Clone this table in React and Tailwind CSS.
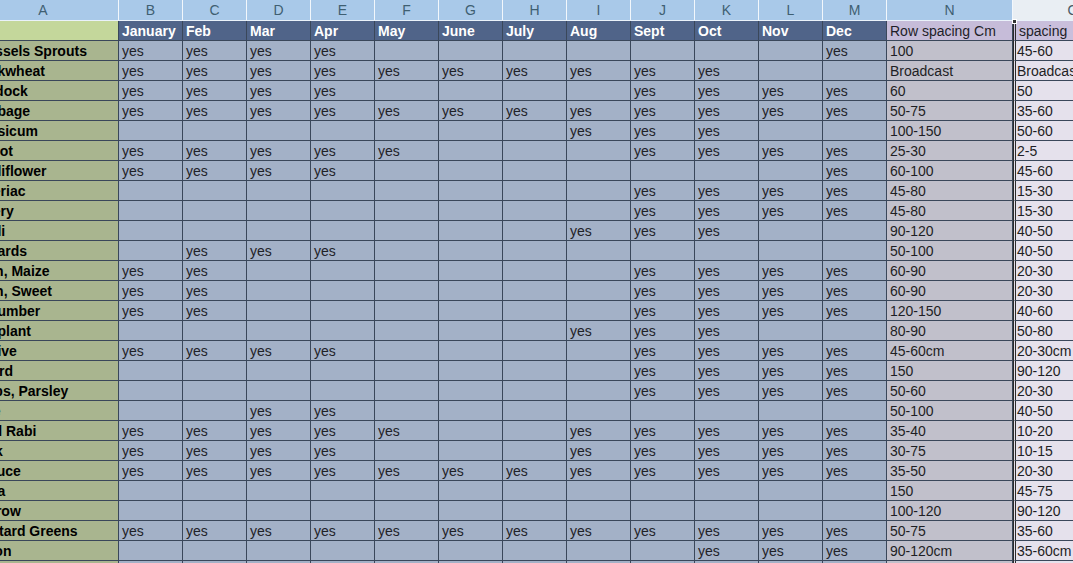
import React from 'react';

const months = ['January', 'Feb', 'Mar', 'Apr', 'May', 'June', 'July', 'Aug', 'Sept', 'Oct', 'Nov', 'Dec'];
const letters = ['B', 'C', 'D', 'E', 'F', 'G', 'H', 'I', 'J', 'K', 'L', 'M'];

// x = "yes" in that month
const crops = [
  ['Brussels Sprouts', 'xxxx.......x', '100', '45-60'],
  ['Buckwheat', 'xxxxxxxxxx..', 'Broadcast', 'Broadcast'],
  ['Burdock', 'xxxx....xxxx', '60', '50'],
  ['Cabbage', 'xxxxxxxxxxxx', '50-75', '35-60'],
  ['Capsicum', '.......xxx..', '100-150', '50-60'],
  ['Carrot', 'xxxxx...xxxx', '25-30', '2-5'],
  ['Cauliflower', 'xxxx.......x', '60-100', '45-60'],
  ['Celeriac', '........xxxx', '45-80', '15-30'],
  ['Celery', '........xxxx', '45-80', '15-30'],
  ['Chilli', '.......xxx..', '90-120', '40-50'],
  ['Collards', '.xxx........', '50-100', '40-50'],
  ['Corn, Maize', 'xx......xxxx', '60-90', '20-30'],
  ['Corn, Sweet', 'xx......xxxx', '60-90', '20-30'],
  ['Cucumber', 'xx......xxxx', '120-150', '40-60'],
  ['Eggplant', '.......xxx..', '80-90', '50-80'],
  ['Endive', 'xxxx....xxxx', '45-60cm', '20-30cm'],
  ['Gourd', '........xxxx', '150', '90-120'],
  ['Herbs, Parsley', '........xxxx', '50-60', '20-30'],
  ['Kale', '..xx........', '50-100', '40-50'],
  ['Kohl Rabi', 'xxxxx..xxxxx', '35-40', '10-20'],
  ['Leek', 'xxxx...xxxxx', '30-75', '10-15'],
  ['Lettuce', 'xxxxxxxxxxxx', '35-50', '20-30'],
  ['Luffa', '............', '150', '45-75'],
  ['Marrow', '............', '100-120', '90-120'],
  ['Mustard Greens', 'xxxxxxxxxxxx', '50-75', '35-60'],
  ['Onion', '.........xxx', '90-120cm', '35-60cm'],
  ['', '............', '', ''],
];

const grid = 'grid grid-cols-[151px_repeat(12,64px)_126px_120px]';

function Cell({ className = '', children }) {
  return (
    <div className={`h-5 border-b border-r border-[#3a475a] pl-[3px] leading-[20px] whitespace-nowrap overflow-hidden ${className}`}>
      {children}
    </div>
  );
}

export default function App() {
  return (
    <div className="w-[1073px] h-[563px] overflow-hidden bg-white font-['Liberation_Sans',Arial,sans-serif] text-[14px]">
      <div className="-ml-[32px] w-[1200px]">
        {/* column letters */}
        <div className={`${grid} h-[21px] bg-[#a9c9e9] text-[#3f5f72] border-b border-[#eaf2fa]`}>
          <div className="text-center leading-[20px] border-r border-[#f2f7fc]">A</div>
          {letters.map((l) => (
            <div key={l} className="text-center leading-[20px] border-r border-[#f2f7fc]">{l}</div>
          ))}
          <div className="text-center leading-[20px] border-r border-[#f2f7fc]">N</div>
          <div className="text-center leading-[20px] bg-[#e9eef3] text-[#4a5a66]">O</div>
        </div>

        {/* month headings */}
        <div className={grid}>
          <Cell className="bg-[#c4d79b]" />
          {months.map((m) => (
            <Cell key={m} className="bg-[#506489] text-white font-bold">{m}</Cell>
          ))}
          <Cell className="bg-[#c6bcd9] text-[#1e1e28]">Row spacing Cm</Cell>
          <div className="relative h-5 border-b border-[#3a475a] border-l-[3px] border-double border-l-[#2b2b2b] bg-[#c9bfdc] text-[#1e1e28] pl-[3px] leading-[20px] whitespace-nowrap">
            <span className="absolute -left-[4px] -top-[2px] w-[5px] h-[5px] bg-[#333] border border-white" />
            spacing
          </div>
        </div>

        {crops.map(([name, pattern, row, plant], i) => (
          <div key={i} className={grid}>
            <Cell className="bg-[#a9b58f] font-bold text-black">{name}</Cell>
            {pattern.split('').map((c, j) => (
              <Cell key={j} className="bg-[#a3b1c7] text-[#1f2228]">{c === 'x' ? 'yes' : ''}</Cell>
            ))}
            <Cell className="bg-[#c1c0cb] text-[#1e1e24]">{row}</Cell>
            <div className="h-5 border-b border-[#3a475a] border-l-[3px] border-double border-l-[#2b2b2b] bg-[#e5e1ec] text-[#1e1e24] pl-[1px] leading-[20px] whitespace-nowrap overflow-hidden">
              {plant}
            </div>
          </div>
        ))}
      </div>
    </div>
  );
}
